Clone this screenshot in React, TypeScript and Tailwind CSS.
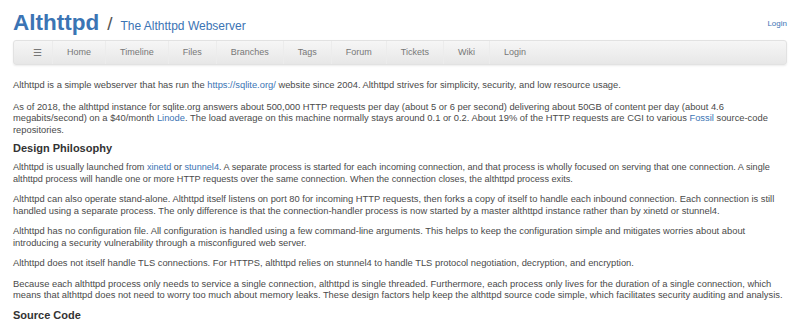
import React from "react";

const A = ({ children }: { children: React.ReactNode }) => (
  <a className="text-[#3b74b4]" href="#">{children}</a>
);

const navItems = ["Home", "Timeline", "Files", "Branches", "Tags", "Forum", "Tickets", "Wiki", "Login"];

export default function App() {
  return (
    <div className="w-[800px] h-[326px] overflow-hidden bg-white text-[#4a4a4a] font-['Liberation_Sans',Arial,sans-serif]">
      <div className="px-[13px]">
        <div className="flex items-end justify-between pt-[6px] h-[36px]">
          <div className="flex items-baseline mb-[2px]">
            <span className="text-[#3b74b4] font-bold text-[22.5px] leading-none">Althttpd</span>
            <span className="text-[#555] text-[19px] leading-none ml-[8px] mr-[8px]">/</span>
            <span className="text-[#3b74b4] text-[12px] leading-none">The Althttpd Webserver</span>
          </div>
          <a href="#" className="text-[#3b74b4] text-[8px] mb-[6px]">Login</a>
        </div>
        <div className="mt-[4px] h-[25px] rounded-[3px] bg-gradient-to-b from-[#f6f6f6] to-[#e7e7e7] border border-[#e2e2e2] shadow-[0_1px_2px_rgba(0,0,0,0.08)] flex items-center text-[9px] text-[#777] pl-[17px]">
          <span className="w-[12px] text-center text-[10px] mr-[9px]">☰</span>
          {navItems.map((n) => (
            <span key={n} className="px-[14px] h-full flex items-center border-l border-[#ececec]">{n}</span>
          ))}
        </div>
        <div className="text-[9.35px] leading-[11.5px] pt-[15px]">
          <p className="mb-[10px]">
            Althttpd is a simple webserver that has run the <A>https://sqlite.org/</A> website since 2004. Althttpd strives for simplicity, security, and low resource usage.
          </p>
          <p className="mb-[5px]">
            As of 2018, the althttpd instance for sqlite.org answers about 500,000 HTTP requests per day (about 5 or 6 per second) delivering about 50GB of content per day (about 4.6 megabits/second) on a $40/month <A>Linode</A>. The load average on this machine normally stays around 0.1 or 0.2. About 19% of the HTTP requests are CGI to various <A>Fossil</A> source-code repositories.
          </p>
          <h2 className="text-[11px] leading-[14px] font-bold text-[#333] mb-[7px]">Design Philosophy</h2>
          <p className="mb-[9px] text-[9.15px]">
            Althttpd is usually launched from <A>xinetd</A> or <A>stunnel4</A>. A separate process is started for each incoming connection, and that process is wholly focused on serving that one connection. A single althttpd process will handle one or more HTTP requests over the same connection. When the connection closes, the althttpd process exits.
          </p>
          <p className="mb-[9px]">
            Althttpd can also operate stand-alone. Althttpd itself listens on port 80 for incoming HTTP requests, then forks a copy of itself to handle each inbound connection. Each connection is still handled using a separate process. The only difference is that the connection-handler process is now started by a master althttpd instance rather than by xinetd or stunnel4.
          </p>
          <p className="mb-[9px]">
            Althttpd has no configuration file. All configuration is handled using a few command-line arguments. This helps to keep the configuration simple and mitigates worries about about introducing a security vulnerability through a misconfigured web server.
          </p>
          <p className="mb-[9px]">
            Althttpd does not itself handle TLS connections. For HTTPS, althttpd relies on stunnel4 to handle TLS protocol negotiation, decryption, and encryption.
          </p>
          <p className="mb-[6px]">
            Because each althttpd process only needs to service a single connection, althttpd is single threaded. Furthermore, each process only lives for the duration of a single connection, which means that althttpd does not need to worry too much about memory leaks. These design factors help keep the althttpd source code simple, which facilitates security auditing and analysis.
          </p>
          <h2 className="text-[11px] leading-[14px] font-bold text-[#333]">Source Code</h2>
        </div>
      </div>
    </div>
  );
}
